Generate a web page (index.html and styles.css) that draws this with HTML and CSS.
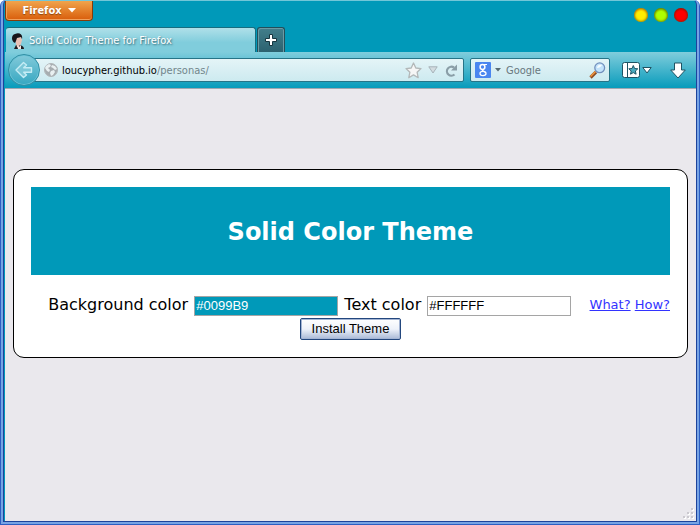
FILE: index.html
```
<!DOCTYPE html>
<html lang="en">
<head>
<meta charset="utf-8">
<title>Solid Color Theme for Firefox</title>
<link rel="stylesheet" href="styles.css">
</head>
<body>
<div class="window">
  <div class="window-inner">
    <header class="chrome">
      <div class="titlebar">
        <button class="app-menu" type="button">Firefox
          <svg width="8" height="5" viewBox="0 0 8 5"><path d="M0 0h8L4 4.500z" fill="#fff"/></svg>
        </button>
        <div class="window-buttons">
          <button class="orb orb-min" type="button" aria-label="Minimize"></button>
          <button class="orb orb-max" type="button" aria-label="Maximize"></button>
          <button class="orb orb-close" type="button" aria-label="Close"></button>
        </div>
      </div>
      <div class="tabs">
        <button class="tab" type="button">
          <svg width="16" height="16" viewBox="0 0 16 16">
            <path d="M4 16l2-4h4c3 1 4 2 4 4z" fill="#1c1a1e"/>
            <path d="M5 5l6-1 1 3-1 4-2 2v2l-2-1-1-3z" fill="#e8c0b4"/>
            <path d="M5 10C1 8 1 2 5 1c5-2 8 1 7 5l-1-2-4 1-1 3z" fill="#17141a"/>
            <path d="M7 12l2 2 2-2v4H8z" fill="#f6e6e2"/>
          </svg>
          <span>Solid Color Theme for Firefox</span>
        </button>
        <button class="new-tab" type="button" aria-label="New tab">
          <svg width="14" height="14" viewBox="0 0 14 14"><path d="M5.500 1.500h3v4h4v3h-4v4h-3v-4h-4v-3h4z" fill="#fff" stroke="#163640"/></svg>
        </button>
      </div>
      <nav class="toolbar">
        <button class="back" type="button" aria-label="Back">
          <svg width="18" height="18" viewBox="0 0 18 18"><path d="M8.500 1.500L1 9l7.500 7.500 3-2.500-2.800-2.800H16.500V6.800H8.700L11.500 4z" fill="#7cc8d8" stroke="#c5edf5" stroke-width="1.400" stroke-linejoin="round"/></svg>
        </button>
        <div class="url-bar">
          <svg width="14" height="14" viewBox="0 0 14 14"><circle cx="7" cy="7" r="6.500" fill="#a6adb0" stroke="#b1b7b9"/><path d="M2 3l3-2 2 1-1 2-2 1 2 2-1 2-2-1-2-3zM8 2l3 1 2 3-2 1-2-2-2-1zM7 8l3-1 1 2-2 3-2 1-1-3z" fill="#e9f0f1"/></svg>
          <div class="address">loucypher.github.io<span>/personas/</span></div>
          <svg class="star" width="17" height="17" viewBox="0 0 17 17"><path d="M8.500 1l2.300 5 5.200.6-3.900 3.600 1.100 5.500-4.700-2.800-4.700 2.800 1.100-5.500L1 6.600 6.200 6z" fill="#f6f6f6" stroke="#b3b8b9" stroke-width="1.300" stroke-linejoin="round"/></svg>
          <svg class="history" width="10" height="8" viewBox="0 0 10 8"><path d="M.8.800h8.400L5 7z" fill="#d3dce0" stroke="#a7b3b9"/></svg>
          <svg width="13" height="13" viewBox="0 0 13 13"><path d="M9.500 10.500A4.500 4.500 0 1 1 9 3.500" fill="none" stroke="#8a9ea7" stroke-width="2.200"/><path d="M12 .5v6H6z" fill="#8a9ea7"/></svg>
        </div>
        <div class="search-bar">
          <button class="engine" type="button" aria-label="Search engine">
            <svg width="16" height="16" viewBox="0 0 16 16"><rect width="16" height="16" rx="1" fill="#4a86f0"/><circle cx="7.500" cy="5" r="2.400" fill="none" stroke="#fff" stroke-width="1.500"/><path d="M8 2.500h4M8 7.500c-2 1 1 1.500 2 2.800" fill="none" stroke="#fff" stroke-width="1.200"/><ellipse cx="8" cy="11.500" rx="3" ry="2.100" fill="none" stroke="#fff" stroke-width="1.300"/></svg>
            <svg width="6" height="4" viewBox="0 0 6 4"><path d="M0 0h6L3 3.500z" fill="#596b72"/></svg>
          </button>
          <input type="text" placeholder="Google" aria-label="Search Google">
          <svg width="17" height="17" viewBox="0 0 17 17"><path d="M1.500 15.500L7 10" stroke="#8b4a22" stroke-width="3.200"/><path d="M1.500 14.500L6.500 9.500" stroke="#ef963e" stroke-width="1.600"/><circle cx="10.700" cy="5.800" r="4.900" fill="#c3e3fb" stroke="#7290bd" stroke-width="1.300"/><path d="M8 6c0-3 3-4 5-3-1 2-3 3-5 3z" fill="#f6fcff"/></svg>
        </div>
        <button class="bookmarks" type="button" aria-label="Bookmarks">
          <svg width="18" height="16" viewBox="0 0 18 16"><rect x=".5" y=".5" width="17" height="15" rx="2" fill="#fff" stroke="#1f5363"/><path d="M5.500 1v14" stroke="#1f5363"/><path d="M11.300 3.500l1.300 3 3.200.3-2.400 2.200.7 3.200-2.800-1.600-2.800 1.600.7-3.200L6.800 6.800l3.200-.3z" fill="#4aabc0" stroke="#1f5363"/></svg>
          <svg width="10" height="7" viewBox="0 0 10 7"><path d="M.8.500h8.400L5 6z" fill="#fff" stroke="#1f5363"/></svg>
        </button>
        <button class="downloads" type="button" aria-label="Downloads">
          <svg width="16" height="17" viewBox="0 0 16 17"><path d="M4.500 1h7v7h3.800L8 16 .7 8h3.800z" fill="#fff" stroke="#1f5363" stroke-linejoin="round"/></svg>
        </button>
      </nav>
    </header>
    <main class="page">
      <section class="card">
        <h1>Solid Color Theme</h1>
        <form>
          <div class="help"><a href="#what">What?</a> <a href="#how">How?</a></div>
          <label for="bg">Background color</label>
          <input class="bg-color" id="bg" type="text" value="#0099B9">
          <label for="fg">Text color</label>
          <input id="fg" type="text" value="#FFFFFF">
          <div class="actions"><button type="button">Install Theme</button></div>
        </form>
      </section>
      <svg class="grip" width="12" height="12" viewBox="0 0 12 12"><path d="M9 1h2v2H9zM5 5h2v2H5zM9 5h2v2H9zM1 9h2v2H1zM5 9h2v2H5zM9 9h2v2H9z" fill="#fff"/><path d="M8 0h2v2H8zM4 4h2v2H4zM8 4h2v2H8zM0 8h2v2H0zM4 8h2v2H4zM8 8h2v2H8z" fill="#cbc9cf"/></svg>
    </main>
  </div>
</div>
</body>
</html>
```
FILE: styles.css
```
* { box-sizing: border-box; }

body {
  margin: 0;
  background: #fff;
  font-family: "DejaVu Sans", Verdana, sans-serif;
}

button { padding: 0; border: 0; background: none; color: inherit; font: inherit; }
svg { display: block; flex: none; }

.window {
  min-height: 100vh;
  display: flex;
  padding: 0 1px 1px;
  background: #2c5fc3;
  border-radius: 6px 6px 0 0;
}

.window-inner {
  flex: 1;
  min-width: 0;
  display: flex;
  flex-direction: column;
  border: solid #1d439c;
  border-width: 0 1px 1px;
  background: #0099b9;
  margin: 0 2px 2px;
  padding-left: 1px;
  position: relative;
  border-radius: 5px 5px 0 0;
}

.window-inner::before {
  content: "";
  position: absolute;
  inset: 0 -3px -3px;
  border: solid #77a3e4;
  border-width: 0 2px 2px;
  border-radius: 5px 5px 0 0;
  pointer-events: none;
}

/* Browser chrome */
.chrome {
  font: 11px/16px "DejaVu Sans Condensed", Tahoma, sans-serif;
  border-top: 1px solid #72c6d8;
  border-bottom: 1px solid #9fa7b1;
}

.titlebar {
  display: flex;
  justify-content: space-between;
  height: 26px;
}

.app-menu {
  display: flex;
  align-items: center;
  justify-content: center;
  gap: 6px;
  width: 88px;
  height: 20px;
  color: #fff;
  font: bold 11px/16px "DejaVu Sans Condensed", Tahoma, sans-serif;
  text-shadow: 0 1px 1px #8a4510;
  border: 1px solid #843b09;
  border-top: 0;
  border-radius: 0 0 4px 4px;
  background: linear-gradient(#f0a44c, #d95d0b);
  box-shadow: inset 0 -1px #efa15c, inset 1px 0 #efa15c;
}

.window-buttons { display: flex; gap: 6px; padding: 7px 8px; }
.orb {
  width: 14px;
  height: 14px;
  border-radius: 50%;
  box-shadow: inset 0 0 2px 1px rgba(90, 50, 0, .5);
}
.orb-min { background: radial-gradient(circle at 50% 60%, #ffed00 45%, #ff8500); }
.orb-max { background: radial-gradient(circle at 50% 60%, #aeff00 45%, #599600); }
.orb-close { background: radial-gradient(circle at 50% 60%, #f00 50%, #b00000); }

.tabs { display: flex; gap: 1px; height: 25px; padding-left: 1px; }

.tab {
  display: flex;
  align-items: center;
  gap: 3px;
  width: 250px;
  padding: 2px 4px 0;
  color: #fff;
  text-shadow: 1px 1px 2px #30606d;
  border-top: 1px solid #176d80;
  border-right: 1px solid #176d80;
  border-radius: 3px 3px 0 0;
  background: linear-gradient(#b0e0e9, #80cddc 60%);
}

.new-tab {
  display: grid;
  place-items: center;
  width: 28px;
  border: 1px solid #214f5b;
  border-bottom: 0;
  border-radius: 3px 3px 0 0;
  background: linear-gradient(#427e8b, #2c6270);
  box-shadow: inset 1px 1px #6b9aa4, inset -1px 0 #6b9aa4;
}

.toolbar {
  display: flex;
  align-items: center;
  height: 36px;
  padding: 0 10px 0 3px;
  background: linear-gradient(#80cddc, #079bbb);
}

.back {
  display: grid;
  place-items: center;
  width: 32px;
  height: 32px;
  margin-right: -10px;
  z-index: 1;
  border: 1px solid #318fa5;
  border-radius: 50%;
  background: linear-gradient(#83cada, #35a7c1);
  box-shadow: inset 0 0 0 1px #6ac3d6;
}

.url-bar, .search-bar {
  display: flex;
  align-items: center;
  height: 24px;
  border: 1px solid #267487;
  border-radius: 2px;
  background: linear-gradient(#e4f4f7, #cdeaf0);
}

.url-bar { flex: 1; padding: 0 5px 0 13px; }
.address { flex: 1; padding: 2px 0 0 4px; color: #000; }
.address span { color: #72858b; }
.star { margin-right: 6px; }
.history { margin-right: 7px; }

.search-bar { width: 140px; margin: 0 12px 0 6px; padding: 0 3px 0 4px; }
.engine { display: flex; align-items: center; gap: 4px; }
.search-bar input {
  flex: 1;
  min-width: 0;
  padding: 2px 0 0 5px;
  border: 0;
  background: none;
  font: inherit;
}
.search-bar input::placeholder { color: #68777d; opacity: 1; }

.bookmarks { display: flex; align-items: center; gap: 2px; margin-right: 18px; }

/* Page */
.page {
  flex: 1;
  position: relative;
  padding: 80px 8px;
  background: #eae8ed;
}

.card {
  padding: 17px;
  background: #fff;
  border: 1px solid #000;
  border-radius: 11px;
}

h1 {
  margin: 0 0 18px;
  padding: 31px 0 29px;
  background: #0099b9;
  color: #fff;
  font-size: 24px;
  line-height: 28px;
  text-align: center;
}

form { font-size: 16px; line-height: 24px; text-align: center; }
form input {
  width: 144px;
  height: 20px;
  margin: 0 1px;
  padding: 1px;
  border: 1px solid #a5a5a5;
  font: 13px/16px "Liberation Sans", Arial, sans-serif;
}
.bg-color { background: #0099b9; color: #fff; }

.help { float: right; font-size: 13px; }
.help a { color: #33f; }

.actions { display: flex; justify-content: center; padding-top: 1px; }
.actions button {
  padding: 2px 11px;
  border: 1px solid #23477e;
  border-radius: 2px;
  background: linear-gradient(#fff, #eef2fa 50%, #a9b9d6);
  box-shadow: inset 0 0 0 1px #a4b5d4;
  color: #000;
  font: 13px/16px "Liberation Sans", Arial, sans-serif;
}

.grip { position: absolute; right: 1px; bottom: 1px; }
```
